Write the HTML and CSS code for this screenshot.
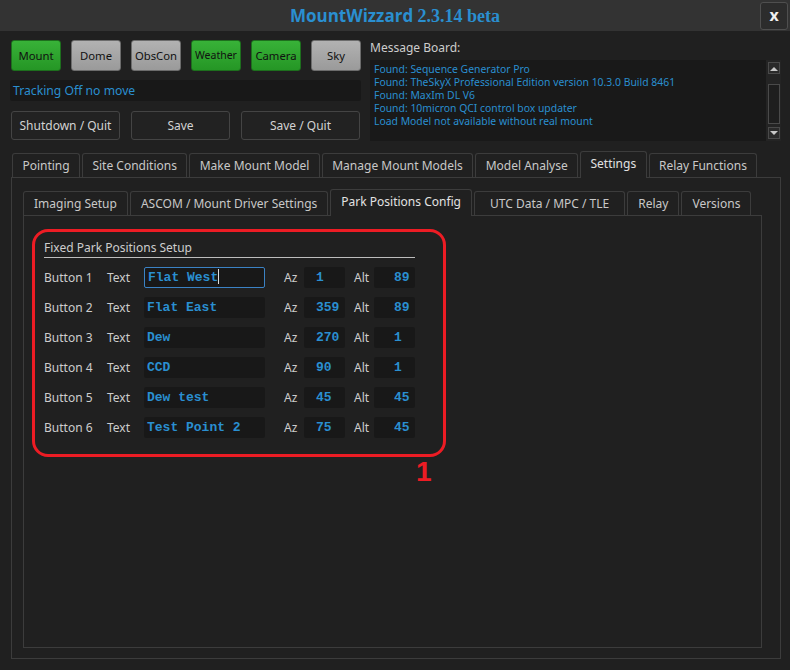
FILE: index.html
```html
<!DOCTYPE html>
<html>
<head>
<meta charset="utf-8">
<link rel="stylesheet" href="styles.css">
</head>
<body>
<div class="titlebar">
  <div class="title"><span class="t1">MountWizzard</span> <span class="t2">2.3.14 beta</span></div>
  <div class="close">x</div>
</div>
<div class="top">
  <div class="left">
    <div class="devices">
      <div class="dev on">Mount</div>
      <div class="dev">Dome</div>
      <div class="dev">ObsCon</div>
      <div class="dev on small">Weather</div>
      <div class="dev on">Camera</div>
      <div class="dev">Sky</div>
    </div>
    <div class="tracking">Tracking Off no move</div>
    <div class="actions">
      <div class="act w1">Shutdown / Quit</div>
      <div class="act w2">Save</div>
      <div class="act w3">Save / Quit</div>
    </div>
  </div>
  <div class="right">
    <div class="mb-label">Message Board:</div>
    <div class="mb">
      <div class="mb-text">
        <div>Found: Sequence Generator Pro</div>
        <div>Found: TheSkyX Professional Edition version 10.3.0 Build 8461</div>
        <div>Found: MaxIm DL V6</div>
        <div>Found: 10micron QCI control box updater</div>
        <div>Load Model not available without real mount</div>
      </div>
      <div class="scroll">
        <div class="sb-btn"><svg width="8" height="5" viewBox="0 0 8 5"><path d="M0 5 L4 1 L8 5 Z" fill="#c8c8c8"/></svg></div>
        <div class="sb-thumb"></div>
        <div class="sb-btn"><svg width="8" height="5" viewBox="0 0 8 5"><path d="M0 0 L4 4 L8 0 Z" fill="#c8c8c8"/></svg></div>
      </div>
    </div>
  </div>
</div>

<div class="tabbar main">
  <div class="tab">Pointing</div>
  <div class="tab">Site Conditions</div>
  <div class="tab">Make Mount Model</div>
  <div class="tab">Manage Mount Models</div>
  <div class="tab">Model Analyse</div>
  <div class="tab sel">Settings</div>
  <div class="tab">Relay Functions</div>
</div>
<div class="panel outer">
  <div class="tabbar inner">
    <div class="tab">Imaging Setup</div>
    <div class="tab">ASCOM / Mount Driver Settings</div>
    <div class="tab sel">Park Positions Config</div>
    <div class="tab wide">UTC Data / MPC / TLE</div>
    <div class="tab">Relay</div>
    <div class="tab">Versions</div>
  </div>
  <div class="panel innerp">
    <div class="annot">
      <div class="group">
        <div class="group-title">Fixed Park Positions Setup</div>
        <div class="rows">
          <div class="row">
            <span class="lbl">Button 1</span><span class="tlbl">Text</span>
            <div class="in txt focus">Flat West<span class="caret"></span></div>
            <span class="az">Az</span><div class="in num az-in">1</div>
            <span class="alt">Alt</span><div class="in num alt-in">89</div>
          </div>
          <div class="row">
            <span class="lbl">Button 2</span><span class="tlbl">Text</span>
            <div class="in txt">Flat East</div>
            <span class="az">Az</span><div class="in num az-in">359</div>
            <span class="alt">Alt</span><div class="in num alt-in">89</div>
          </div>
          <div class="row">
            <span class="lbl">Button 3</span><span class="tlbl">Text</span>
            <div class="in txt">Dew</div>
            <span class="az">Az</span><div class="in num az-in">270</div>
            <span class="alt">Alt</span><div class="in num alt-in">1</div>
          </div>
          <div class="row">
            <span class="lbl">Button 4</span><span class="tlbl">Text</span>
            <div class="in txt">CCD</div>
            <span class="az">Az</span><div class="in num az-in">90</div>
            <span class="alt">Alt</span><div class="in num alt-in">1</div>
          </div>
          <div class="row">
            <span class="lbl">Button 5</span><span class="tlbl">Text</span>
            <div class="in txt">Dew test</div>
            <span class="az">Az</span><div class="in num az-in">45</div>
            <span class="alt">Alt</span><div class="in num alt-in">45</div>
          </div>
          <div class="row">
            <span class="lbl">Button 6</span><span class="tlbl">Text</span>
            <div class="in txt">Test Point 2</div>
            <span class="az">Az</span><div class="in num az-in">75</div>
            <span class="alt">Alt</span><div class="in num alt-in">45</div>
          </div>
        </div>
      </div>
      <span class="annot-num">1</span>
    </div>
  </div>
</div>
</body>
</html>
```

FILE: styles.css
```css
* { box-sizing: border-box; }
body {
  margin: 0;
  width: 790px;
  height: 670px;
  overflow: hidden;
  background: #202020;
  font-family: "Noto Sans", "Open Sans", sans-serif;
  font-size: 12px;
  color: #cdcdcd;
}
.titlebar {
  height: 31px;
  background: #333333;
  display: grid;
  grid-template-columns: 1fr 28px;
  align-items: center;
  padding: 0 2px 0 30px;
}
.title {
  text-align: center;
  color: #2a8fd0;
  font-weight: bold;
  font-size: 17px;
  line-height: 20px;
}
.t1 { font-family: "Open Sans", sans-serif; }
.t2 { font-family: "Liberation Serif", serif; font-size: 18px; }
.close {
  height: 28px;
  border: 1px solid #4f4f4f;
  border-radius: 3px;
  background: #2c2c2c;
  color: #f0f0f0;
  font-weight: bold;
  font-size: 16px;
  text-align: center;
  line-height: 24px;
}
.top {
  display: flex;
  gap: 9px;
  padding: 9px 0 0 10px;
}
.left { width: 351px; }
.devices { display: flex; gap: 10px; padding-left: 1px; }
.dev {
  width: 50px;
  height: 31px;
  border-radius: 3px;
  border: 1px solid #6c6c6c;
  background: linear-gradient(#b2b2b2, #9a9a9a);
  color: #111;
  font-size: 11.3px;
  text-align: center;
  line-height: 29px;
}
.dev.on {
  border-color: #1d6f1d;
  background: linear-gradient(#38b238, #259625);
}
.dev.small { font-size: 10.5px; }
.tracking {
  margin-top: 9px;
  height: 21px;
  background: #181818;
  border-radius: 2px;
  color: #2a8fd0;
  font-size: 12.2px;
  line-height: 22px;
  padding-left: 3px;
}
.actions { display: flex; gap: 11px; margin-top: 10px; padding-left: 1px; }
.act {
  height: 29px;
  border: 1px solid #444;
  border-radius: 3px;
  background: #222;
  color: #d2d2d2;
  font-size: 12px;
  text-align: center;
  line-height: 27px;
}
.w1 { width: 109px; }
.w2 { width: 99px; }
.w3 { width: 119px; }
.right { width: 411px; }
.mb-label {
  height: 20px;
  font-size: 12px;
  line-height: 16px;
  color: #cdcdcd;
}
.mb { display: flex; height: 81px; }
.mb-text {
  width: 396px;
  background: #191919;
  padding: 3px 4px;
  font-size: 10.4px;
  line-height: 13px;
  color: #2a8fd0;
}
.scroll {
  width: 15px;
  background: #242424;
  display: flex;
  flex-direction: column;
  align-items: center;
  padding: 2px 0 2px;
}
.sb-btn {
  width: 12px;
  height: 12px;
  border: 1px solid #4a4a4a;
  background: #2a2a2a;
  display: flex;
  align-items: center;
  justify-content: center;
}
.sb-thumb {
  width: 12px;
  height: 40px;
  margin: 10px 0 3px;
  border: 1px solid #4a4a4a;
  background: #1e1e1e;
}
.tabbar {
  display: flex;
  align-items: flex-end;
  gap: 2px;
  height: 26px;
}
.tabbar.main { margin-top: 10px; padding-left: 12px; }
.tab {
  height: 24px;
  border: 1px solid #3c3c3c;
  border-bottom: none;
  border-radius: 3px 3px 0 0;
  padding: 0 10px;
  line-height: 23px;
  color: #c8c8c8;
  background: #202020;
}
.tabbar.main .tab { padding: 0 9.4px; }
.tab.wide { padding: 0 15px; }
.tab.sel {
  height: 27px;
  margin-bottom: -1px;
  line-height: 24px;
  color: #e2e2e2;
  position: relative;
  z-index: 1;
}
.panel { border: 1px solid #3c3c3c; }
.outer {
  margin-left: 11px;
  width: 770px;
  height: 482px;
  padding: 11px 18px 11px 11px;
}
.innerp {
  height: 433px;
}
.annot {
  position: relative;
  margin: 13px 0 0 8px;
  width: 414px;
  height: 228px;
  border: 3px solid #ed1c24;
  border-radius: 16px;
  padding: 8px 0 0 9px;
}
.group { width: 371px; }
.group-title {
  font-size: 12px;
  line-height: 16px;
  padding-bottom: 1px;
  border-bottom: 1px solid #bdbdbd;
  color: #cdcdcd;
}
.rows {
  display: flex;
  flex-direction: column;
  gap: 9px;
  margin-top: 9px;
}
.row { display: flex; align-items: center; height: 21px; font-size: 12px; }
.lbl { width: 63px; }
.tlbl { width: 37px; }
.az { width: 20px; margin-left: 19px; }
.alt { width: 20px; margin-left: 9px; }
.in {
  height: 21px;
  background: #181818;
  border-radius: 2px;
  font-family: "Liberation Mono", monospace;
  font-weight: bold;
  font-size: 13px;
  line-height: 21px;
  color: #2a8fd0;
  white-space: pre;
}
.txt { width: 121px; padding-left: 3px; }
.txt.focus { border: 1px solid #3b82c4; line-height: 19px; }
.caret {
  display: inline-block;
  width: 1px;
  height: 15px;
  background: #e0e0e0;
  vertical-align: -3px;
}
.num { width: 41px; }
.az-in { padding-left: 12px; }
.alt-in { padding-left: 20px; }
.annot-num {
  position: absolute;
  left: 381px;
  top: 226px;
  font-family: "Liberation Sans", sans-serif;
  font-weight: bold;
  font-size: 28px;
  line-height: 1;
  color: #ed1c24;
}
```
